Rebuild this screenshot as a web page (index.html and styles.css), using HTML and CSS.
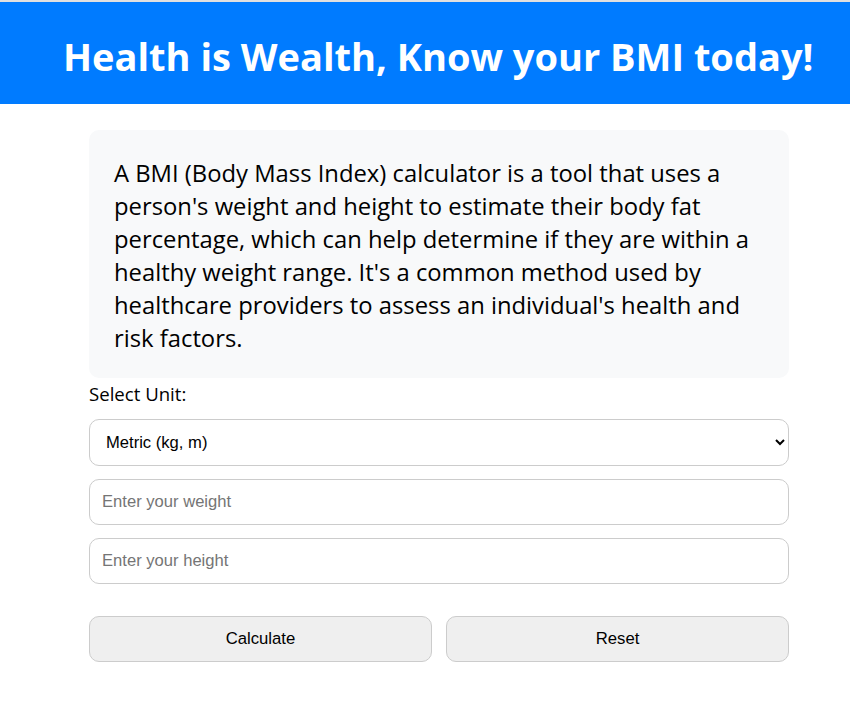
FILE: index.html
```html
<!DOCTYPE html>
<html lang="en">
<head>
<meta charset="utf-8">
<title>BMI Calculator</title>
<link rel="stylesheet" href="styles.css">
</head>
<body>
<header class="header">
  <h1 class="title">Health is Wealth, Know your BMI today!</h1>
</header>
<main class="container">
  <div class="info">
    <p>A BMI (Body Mass Index) calculator is a tool that uses a person's weight and height to estimate their body fat percentage, which can help determine if they are within a healthy weight range. It's a common method used by healthcare providers to assess an individual's health and risk factors.</p>
  </div>
  <label class="label" for="unit">Select Unit:</label>
  <select id="unit" class="field select">
    <option>Metric (kg, m)</option>
    <option>Imperial (lb, in)</option>
  </select>
  <input class="field" type="text" placeholder="Enter your weight">
  <input class="field" type="text" placeholder="Enter your height">
  <div class="buttons">
    <button class="btn">Calculate</button>
    <button class="btn">Reset</button>
  </div>
</main>
</body>
</html>
```
FILE: styles.css
```css
* { box-sizing: border-box; }
html, body { margin: 0; padding: 0; background: #fff; }
body {
  font-family: "Open Sans", "Noto Sans", sans-serif;
  color: #000;
  border-top: 2px solid #e0e0e0;
}
.header {
  background: #007bff;
  height: 102px;
  display: flex;
  align-items: center;
  padding-left: 63px;
  padding-top: 6px;
}
.title {
  margin: 0;
  color: #fff;
  font-size: 38px;
  font-weight: 700;
  white-space: nowrap;
}
.container {
  width: 700px;
  margin: 26px 0 0 89px;
  display: flex;
  flex-direction: column;
}
.info {
  background: #f8f9fa;
  border-radius: 10px;
  padding: 27px 25px 23px;
}
.info p {
  margin: 0;
  font-size: 23.8px;
  line-height: 33px;
}
.label {
  margin-top: 3px;
  font-size: 18.6px;
  line-height: 26px;
}
.field {
  height: 46px;
  width: 100%;
  border: 1px solid #ccc;
  border-radius: 10px;
  padding: 0 12px;
  font-family: "Liberation Sans", Arial, sans-serif;
  font-size: 16.6px;
  background: #fff;
  margin-top: 13px;
}
.field::placeholder { color: #757575; }
.select { margin-top: 12px; height: 47px; }
.buttons {
  display: flex;
  gap: 14px;
  margin-top: 32px;
}
.btn {
  flex: 1;
  height: 46px;
  border: 1px solid #ccc;
  border-radius: 10px;
  background: #efefef;
  font-family: "Liberation Sans", Arial, sans-serif;
  font-size: 16.7px;
  color: #000;
}
```
